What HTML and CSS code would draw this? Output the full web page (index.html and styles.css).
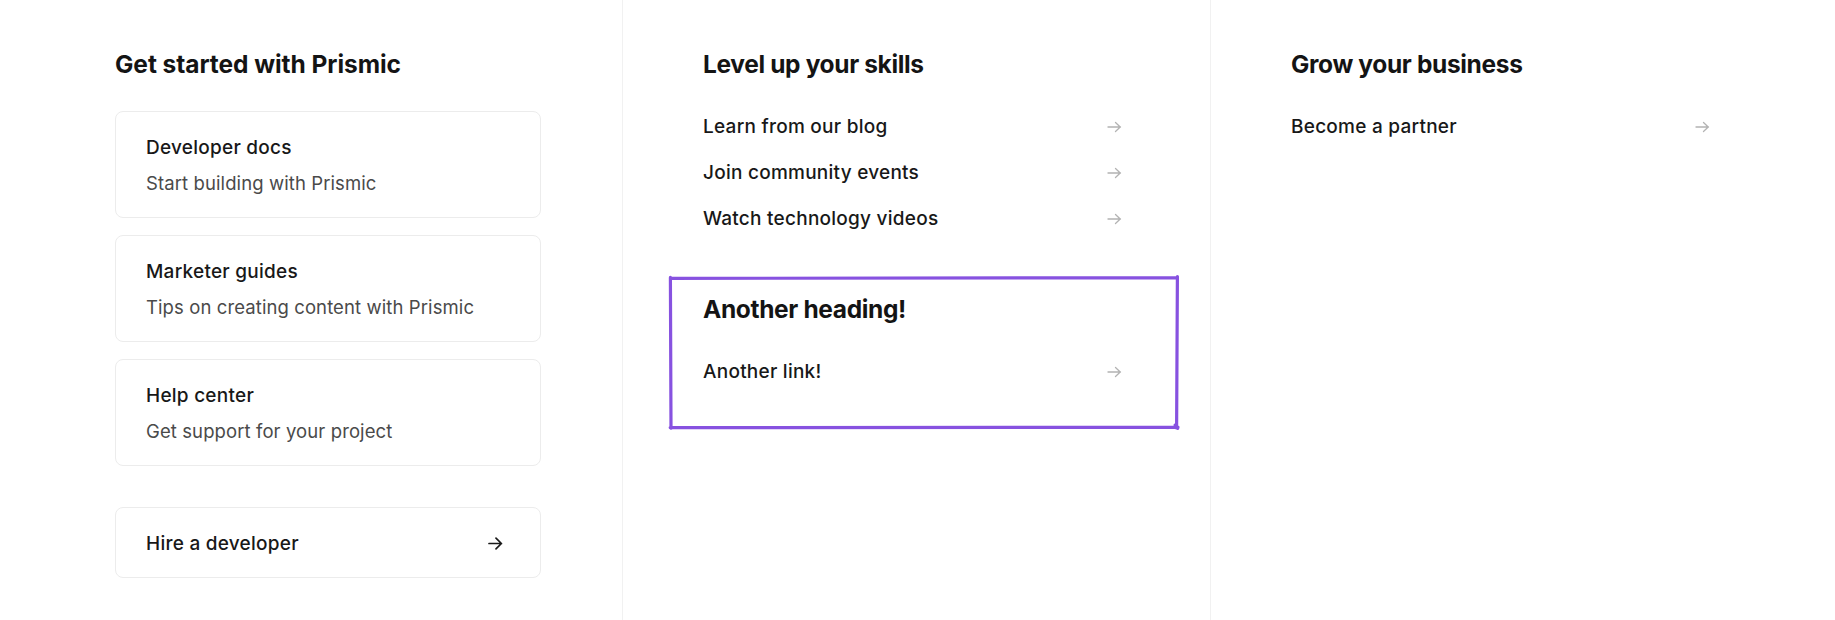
FILE: index.html
```html
<!DOCTYPE html>
<html lang="en">
<head>
<meta charset="utf-8">
<title>Prismic menu</title>
<link rel="stylesheet" href="styles.css">
</head>
<body>
<div class="menu">
  <section class="col col-first">
    <h2 class="col-title">Get started with Prismic</h2>
    <div class="cards">
      <a class="card" href="#">
        <span class="card-title">Developer docs</span>
        <span class="card-text">Start building with Prismic</span>
      </a>
      <a class="card" href="#">
        <span class="card-title">Marketer guides</span>
        <span class="card-text">Tips on creating content with Prismic</span>
      </a>
      <a class="card" href="#">
        <span class="card-title">Help center</span>
        <span class="card-text">Get support for your project</span>
      </a>
    </div>
    <a class="card card-cta" href="#">
      <span class="card-title">Hire a developer</span>
      <svg class="arrow arrow-dark" width="15" height="13" viewBox="0 0 15 13"><path d="M1 6.5h12.5M8 1.2l5.4 5.3L8 11.8" fill="none" stroke="currentColor" stroke-width="1.7" stroke-linecap="round" stroke-linejoin="round"/></svg>
    </a>
  </section>

  <section class="col">
    <h2 class="col-title">Level up your skills</h2>
    <ul class="links">
      <li><a class="link" href="#"><span>Learn from our blog</span><svg class="arrow" width="15" height="12" viewBox="0 0 15 12"><path d="M1 6h12.5M8.5 1.5L13.2 6l-4.7 4.5" fill="none" stroke="currentColor" stroke-width="1.3" stroke-linecap="round" stroke-linejoin="round"/></svg></a></li>
      <li><a class="link" href="#"><span>Join community events</span><svg class="arrow" width="15" height="12" viewBox="0 0 15 12"><path d="M1 6h12.5M8.5 1.5L13.2 6l-4.7 4.5" fill="none" stroke="currentColor" stroke-width="1.3" stroke-linecap="round" stroke-linejoin="round"/></svg></a></li>
      <li><a class="link" href="#"><span>Watch technology videos</span><svg class="arrow" width="15" height="12" viewBox="0 0 15 12"><path d="M1 6h12.5M8.5 1.5L13.2 6l-4.7 4.5" fill="none" stroke="currentColor" stroke-width="1.3" stroke-linecap="round" stroke-linejoin="round"/></svg></a></li>
    </ul>
    <div class="slot">
      <svg class="slot-outline" viewBox="0 0 510 154" preserveAspectRatio="none"><path d="M1.8 2.4L508.4 1.6 M508.4 0.6L507.6 153 M509 152.2L1.2 152.6 M2 153.2L1.4 1.4 M506.2 150L508.6 153.4" fill="none" stroke="#8752e0" stroke-width="3.2" stroke-linecap="round"/></svg>
      <h2 class="col-title">Another heading!</h2>
      <ul class="links">
        <li><a class="link" href="#"><span>Another link!</span><svg class="arrow" width="15" height="12" viewBox="0 0 15 12"><path d="M1 6h12.5M8.5 1.5L13.2 6l-4.7 4.5" fill="none" stroke="currentColor" stroke-width="1.3" stroke-linecap="round" stroke-linejoin="round"/></svg></a></li>
      </ul>
    </div>
  </section>

  <section class="col">
    <h2 class="col-title">Grow your business</h2>
    <ul class="links">
      <li><a class="link" href="#"><span>Become a partner</span><svg class="arrow" width="15" height="12" viewBox="0 0 15 12"><path d="M1 6h12.5M8.5 1.5L13.2 6l-4.7 4.5" fill="none" stroke="currentColor" stroke-width="1.3" stroke-linecap="round" stroke-linejoin="round"/></svg></a></li>
    </ul>
  </section>
</div>
</body>
</html>
```

FILE: styles.css
```css
* { box-sizing: border-box; }

html, body {
  margin: 0;
  padding: 0;
  background: #ffffff;
}

body {
  font-family: Inter, "Noto Sans", "Liberation Sans", sans-serif;
  color: #161616;
  -webkit-font-smoothing: antialiased;
}

a { color: inherit; text-decoration: none; }

.menu {
  display: flex;
  height: 620px;
}

.col {
  flex: 0 0 auto;
  width: 588px;
  padding: 48px 81px 0 80px;
  border-left: 1px solid #f1f1f1;
}

.col-first {
  width: 622px;
  padding-left: 115px;
  border-left: none;
}

.col-title {
  margin: 0;
  font-size: 24.5px;
  line-height: 32px;
  font-weight: 700;
  letter-spacing: -0.35px;
  color: #141414;
}

.col-first .col-title { letter-spacing: -0.05px; }

.cards {
  margin-top: 31px;
  display: flex;
  flex-direction: column;
  gap: 17px;
}

.card {
  display: flex;
  flex-direction: column;
  gap: 7px;
  padding: 22px 30px 20px;
  border: 1px solid #ececec;
  border-radius: 8px;
  background: #fff;
}

.card-title {
  font-size: 19px;
  line-height: 28px;
  font-weight: 500;
  letter-spacing: 0.25px;
  color: #181818;
}

.card-text {
  font-size: 18.5px;
  line-height: 28px;
  font-weight: 400;
  letter-spacing: 0.1px;
  color: #4a4a4a;
}

.card-cta {
  margin-top: 41px;
  flex-direction: row;
  align-items: center;
  justify-content: space-between;
}

.card-cta .card-title { line-height: 27px; }

.links {
  list-style: none;
  margin: 24px 0 0;
  padding: 0;
}

.link {
  display: flex;
  align-items: center;
  justify-content: space-between;
  padding: 9px 7px 9px 0;
  font-size: 19px;
  line-height: 28px;
  font-weight: 500;
  letter-spacing: 0.25px;
  color: #181818;
}

.arrow {
  display: block;
  color: #b3b3b3;
}

.arrow-dark {
  color: #1a1a1a;
  margin-right: 7px;
}

.slot {
  position: relative;
  margin: 34px 0 0 -34px;
  width: 510px;
  padding: 17px 50px 34px 34px;
}

.slot-outline {
  position: absolute;
  left: 0;
  top: 0;
  width: 100%;
  height: 100%;
  overflow: visible;
  pointer-events: none;
}
```
